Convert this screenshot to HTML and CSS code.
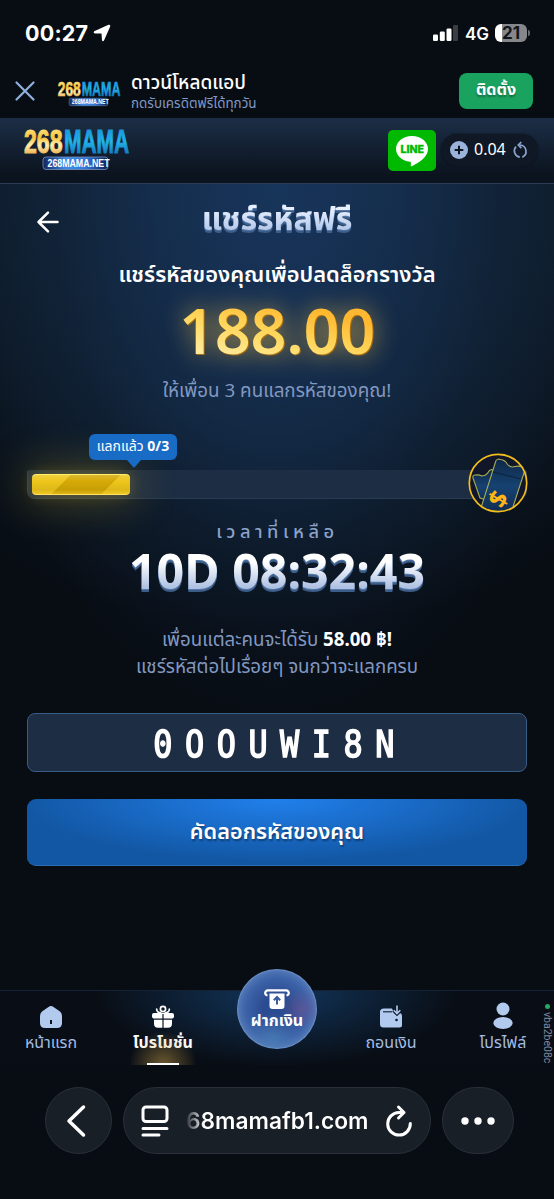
FILE: index.html
```html
<!DOCTYPE html>
<html lang="th">
<head>
<meta charset="utf-8">
<title>268MAMA</title>
<link rel="stylesheet" href="styles.css">
</head>
<body>
<div class="phone">
  <div class="status">
    <span class="clock">00:27</span>
    <svg class="loc" width="18" height="18" viewBox="0 0 18 18"><path d="M1.200 7.200 15.500 .8Q17.800 .2 17.200 2.500L11 16.500Q10 18 9 16.500L8.500 9.500 2 9.500Q-.2 8.700 1.200 7.200Z" fill="#fff"/></svg>
    <svg class="bars" width="26" height="16" viewBox="0 0 26 16"><rect x="0" y="9.500" width="5" height="6.500" rx="1.300" fill="#fff"/><rect x="6.800" y="6.500" width="5" height="9.500" rx="1.300" fill="#fff"/><rect x="13.500" y="3.500" width="5" height="12.500" rx="1.300" fill="#fff"/><rect x="20" y="0" width="5" height="16" rx="1.300" fill="#3a3d42"/></svg>
    <span class="net">4G</span>
    <span class="battery">21</span><span class="cap"></span>
  </div>

  <div class="install">
    <svg class="close" width="20" height="20" viewBox="0 0 20 20" fill="none" stroke="#8fb0dc" stroke-width="2.200" stroke-linecap="round"><path d="M1.500 1.500 18.500 18.500M18.500 1.500 1.500 18.500"/></svg>
    <div class="logo-small">
      <svg width="66" height="31" viewBox="0 0 110 52"><use href="#logo"/></svg>
    </div>
    <div class="install-text">
      <div class="install-title">ดาวน์โหลดแอป</div>
      <div class="install-sub">กดรับเครดิตฟรีได้ทุกวัน</div>
    </div>
    <div class="install-btn">ติดตั้ง</div>
  </div>

  <div class="header">
    <svg class="logo" width="110" height="52" viewBox="0 0 110 52">
      <defs>
        <linearGradient id="gold" x1="0" y1="0" x2="0" y2="1"><stop offset="0" stop-color="#fff0a0"/><stop offset=".4" stop-color="#f9c53c"/><stop offset=".6" stop-color="#fff0b0"/><stop offset="1" stop-color="#e38a12"/></linearGradient>
        <linearGradient id="sky" x1="0" y1="0" x2="0" y2="1"><stop offset="0" stop-color="#1787d4"/><stop offset=".5" stop-color="#22b4ec"/><stop offset="1" stop-color="#0b5ba8"/></linearGradient>
        <linearGradient id="pill" x1="0" x2="1"><stop offset="0" stop-color="#13255e"/><stop offset=".35" stop-color="#3f8ce8"/><stop offset=".65" stop-color="#3479dc"/><stop offset="1" stop-color="#0d1f55"/></linearGradient>
      </defs>
      <g id="logo">
        <g class="logo-word">
          <text transform="translate(1 30) scale(.7 1)" fill="url(#gold)" stroke="url(#gold)">268</text>
          <text transform="translate(41 30) scale(.635 1)" fill="url(#sky)" stroke="url(#sky)">MAMA</text>
        </g>
        <rect x="20" y="34" width="65" height="12.500" rx="3" fill="url(#pill)" stroke="#7793bd" stroke-width=".8"/>
        <text class="logo-net" transform="translate(24.500 43.800) scale(.8 1)">268MAMA.NET</text>
      </g>
    </svg>
    <svg class="line" width="48" height="41" viewBox="0 0 48 41"><rect width="48" height="41" rx="5" fill="#00b900"/><path d="M24 6C15 6 8 11.800 8 19c0 6.500 5.600 11.500 14 12.800 1.200.3 1 1.200.8 2.900-.2 1.500.3 2 1.600 1.300C31 32.500 40 27 40 19 40 11.800 33 6 24 6Z" fill="#fff"/><text class="line-word" x="12.500" y="22.700" textLength="23.500" lengthAdjust="spacingAndGlyphs">LINE</text></svg>
    <div class="balance">
      <svg width="18" height="18" viewBox="0 0 18 18"><circle cx="9" cy="9" r="9" fill="#9bb2da"/><path d="M9 4.700v8.600M4.700 9h8.600" stroke="#0d1420" stroke-width="2"/></svg>
      <span class="amount">0.04</span>
      <svg width="16" height="18" viewBox="0 0 16 18" fill="none" stroke="#8ba4cd" stroke-width="1.700"><path d="M7 4A6.400 6.400 0 0 1 9.300 16.200M6.800 16.200A6.400 6.400 0 0 1 3 5.600M8.300 1 5.300 4.100 8.300 7.100"/></svg>
    </div>
  </div>

  <div class="main">
    <svg class="back" width="22" height="22" viewBox="0 0 22 22" fill="none" stroke="#fff" stroke-width="2.500" stroke-linecap="round" stroke-linejoin="round"><path d="M20.500 11H1.500M11 1.700 1.500 11l9.500 9.300"/></svg>
    <h1 class="title"><span>แชร์รหัสฟรี</span></h1>
    <div class="lead"><span>แชร์รหัสของคุณเพื่อปลดล็อกรางวัล</span></div>
    <div class="prize"><span>188.00</span></div>
    <div class="invite"><span>ให้เพื่อน 3 คนแลกรหัสของคุณ!</span></div>
    <div class="progress">
      <div class="fill"></div>
      <div class="tip">แลกแล้ว <b>0/3</b></div>
      <svg class="ticket" width="60" height="60" viewBox="0 0 60 60">
        <defs><clipPath id="disc"><circle cx="30" cy="30" r="28.500"/></clipPath><linearGradient id="tk" x1="0" y1="0" x2="0" y2="1"><stop offset="0" stop-color="#0f2747"/><stop offset=".5" stop-color="#164272"/><stop offset="1" stop-color="#0e2c52"/></linearGradient></defs>
        <circle cx="30" cy="30" r="29" fill="#121629"/>
        <g clip-path="url(#disc)" fill="url(#tk)" stroke="#a5ad50" stroke-width="1.100">
          <path d="M12 45 5 25q-.8-2.500 2-3 4-.5 7 1 5-.5 7-5 2-2 4-1L28 50Z"/>
          <path d="M12 58 27.500 9q1.200-4 5-2.500 5 .5 7 5 3 3.500 7.500 2 4-1 7 .500 3.500 1 2.500 4.500L43 60Z"/>
          <path d="M25 19 53 26" stroke="#0d233c"/>
        </g>
        <circle cx="30" cy="30" r="28.700" fill="none" stroke="#f3bd1b" stroke-width="1.700"/>
        <text class="dollar" transform="translate(30.500 46) rotate(-60)" y="8.500">$</text>
      </svg>
    </div>
    <div class="left-label"><span>เวลาที่เหลือ</span></div>
    <div class="timer"><span>10D 08:32:43</span></div>
    <div class="note"><span>เพื่อนแต่ละคนจะได้รับ <b>58.00 ฿!</b></span><span>แชร์รหัสต่อไปเรื่อยๆ จนกว่าจะแลกครบ</span></div>
    <div class="code"><span>0OOUWI8N</span></div>
    <div class="copy"><span>คัดลอกรหัสของคุณ</span></div>
  </div>

  <div class="nav">
    <div class="item home"><svg width="24" height="24" viewBox="0 0 24 24"><path d="M9.500 2 3 6.400Q1 8 1 11v7q0 5 5 5h12q5 0 5-5v-7q0-3-2-4.600L14.500 2Q12 .2 9.500 2Z" fill="#b3caef"/><path d="M12 15v4" stroke="#0d1420" stroke-width="2"/></svg><span>หน้าแรก</span></div>
    <div class="item promo"><svg width="24" height="24" viewBox="0 0 24 24"><path d="M3 8h18q2 0 2 2v1.500q0 1.500-1.500 2H2.500Q1 13 1 11.500V10q0-2 2-2ZM3 14.800h18v4q0 4-4 4H7q-4 0-4-4Z" fill="#fff"/><circle cx="12" cy="4" r="2.600" fill="none" stroke="#fff" stroke-width="1.700"/><path d="M10.500 8C7 8 5 6 5.800 3.500M13.500 8c3.500 0 5.500-2 4.700-4.500" fill="none" stroke="#fff" stroke-width="1.700"/><path d="M12 9v14" stroke="#0b1421" stroke-width="1.200"/></svg><span>โปรโมชั่น</span><i></i></div>
    <div class="item slot"></div>
    <div class="item cash"><svg width="24" height="24" viewBox="0 0 24 24"><path d="M5 3.500h8l2 4.500q3 3 6 0 2 .5 2 3V20q0 2.500-2.500 2.500h-16Q1 22.500 1 19V7q0-3.500 4-3.500Z" fill="#b3caef"/><path d="M4 6.800h9" stroke="#17263d" stroke-width="1.200"/><path d="M18 .5v8M14.700 5.200 18 8.500l3.300-3.300" fill="none" stroke="#0b1828" stroke-width="4"/><path d="M18 .5v8M14.700 5.200 18 8.500l3.300-3.300" fill="none" stroke="#b3caef" stroke-width="1.600"/><circle cx="17.500" cy="15" r="1.300" fill="#0d1a2c"/></svg><span>ถอนเงิน</span></div>
    <div class="item user"><svg width="22" height="28" viewBox="0 0 22 28"><circle cx="11" cy="7" r="6.500" fill="#b3caef"/><ellipse cx="11" cy="21" rx="9.700" ry="6" fill="#b3caef"/></svg><span>โปรไฟล์</span></div>
    <div class="deposit"><svg width="26" height="20" viewBox="0 0 26 20"><path d="M3.500 6.500Q1.200 6 1.200 4t2.500-2.700h18.600q2.500.7 2.500 2.700t-2.300 2.500" fill="none" stroke="#fff" stroke-width="2.200"/><path d="M5.500 4.500h15V17q0 3-3 3h-9q-3 0-3-3Z" fill="#fff"/><path d="M13 15.500V8M9.800 11.200 13 8l3.200 3.200" fill="none" stroke="#3a5a9b" stroke-width="2"/></svg><span>ฝากเงิน</span></div>
    <div class="build"><i></i><span>vba2be08c</span></div>
  </div>

  <div class="browser">
    <div class="circle back-btn"><svg width="20" height="32" viewBox="0 0 20 32" fill="none" stroke="#fff" stroke-width="3.500" stroke-linecap="round" stroke-linejoin="round"><path d="M17.500 2 3 16l14.500 14"/></svg></div>
    <div class="url">
      <svg width="28" height="32" viewBox="0 0 28 32" fill="none" stroke="#fff" stroke-width="3" stroke-linecap="round"><rect x="2" y="2" width="24" height="14.500" rx="3"/><path d="M2 23.500h24M2 30h16"/></svg>
      <span class="host">68mamafb1.com</span>
      <svg width="28" height="32" viewBox="0 0 28 32" fill="none" stroke="#fff" stroke-width="3" stroke-linecap="round" stroke-linejoin="round"><path d="M19 7.500H14A11.300 11.300 0 1 0 25.300 18.500M13.500 2 19 7.500 13.500 13"/></svg>
    </div>
    <div class="circle more"><svg width="34" height="8" viewBox="0 0 34 8" fill="#fff"><circle cx="4" cy="4" r="3.700"/><circle cx="17" cy="4" r="3.700"/><circle cx="30" cy="4" r="3.700"/></svg></div>
  </div>
</div>
</body>
</html>
```

FILE: styles.css
```css
* { box-sizing: border-box; }
body { margin: 0; background: #080d14; font-family: "Noto Sans", "Noto Sans Thai", sans-serif; color: #fff; }
.phone { width: 554px; height: 1199px; overflow: hidden; display: flex; flex-direction: column; }
span { white-space: nowrap; }
svg { flex: none; overflow: visible; }

.status { height: 66px; display: flex; align-items: center; padding: 0 24px 0 25px; flex: none; font-family: Inter, sans-serif; }
.clock { font-size: 21.500px; font-weight: 700; letter-spacing: .2px; }
.loc { margin-left: 5px; }
.bars { margin-left: auto; }
.net { font-size: 17px; font-weight: 600; margin: 2px 6px 0 6px; }
.battery { width: 32px; height: 18px; border-radius: 6px; background: linear-gradient(90deg, #fff 21%, #85878a 21%); color: #11151b; font-size: 17px; font-weight: 700; line-height: 18px; text-align: center; }
.cap { width: 2px; height: 6px; margin-left: 1px; border-radius: 0 3px 3px 0; background: #696b70; }

.install { height: 52px; display: flex; flex: none; padding-right: 21px; }
.close { margin: 15px 0 0 15px; }
.logo-small { margin: 12px 0 0 22px; }
.install-text { margin-left: 8px; }
.install-title { font-size: 19px; font-weight: 500; line-height: 24px; margin-top: 4px; white-space: nowrap; }
.install-sub { font-size: 13.450px; line-height: 18px; margin-top: 0; color: #8199c2; white-space: nowrap; }
.install-btn { width: 74px; height: 36px; margin: 7px 0 0 auto; border-radius: 8px; background: #1aa25f; text-align: center; font-weight: 700; font-size: 16px; line-height: 33px; text-shadow: 0 2px 2px #0005; }

.header { height: 66px; flex: none; display: flex; align-items: flex-start; padding: 7px 16px 0 23px; background: linear-gradient(#1c2e47, #0b131e 88%); border-bottom: 1px solid #2a3c58; }
.logo { margin-top: -2px; }
.logo-word { font: 700 33px "Liberation Sans", sans-serif; stroke-width: 1px; }
.logo-net { font: 700 11px "Liberation Sans", sans-serif; fill: #fff; }
.line { margin: 5px 0 0 255px; }
.line-word { font: 800 10px Inter, sans-serif; fill: #00b900; stroke: #00b900; stroke-width: .3px; }
.balance { margin: 9px 0 0 5px; width: 97px; height: 32px; border-radius: 16px; background: #0f1824; box-shadow: 0 0 2px #0008; display: flex; align-items: center; padding: 0 9px; gap: 6px; }
.amount { font-family: "Noto Sans", sans-serif; font-size: 16px; line-height: 30px; width: 33px; position: relative; top: -1px; }

.main { height: 806px; flex: none; padding: 0 27px; position: relative; display: flex; flex-direction: column; align-items: center; text-align: center; background: radial-gradient(ellipse 320px 530px at 50% 0, #17345a, #17345aa0 38%, #12294550 70%, transparent 100%), radial-gradient(ellipse 480px 450px at 50% 0, #14273d, #0f1e2e 55%, transparent 100%); }
.back { position: absolute; left: 37px; top: 27px; }
.title { margin: 11px 0 0; font-size: 32px; line-height: 46px; font-weight: 700; }
.title span, .timer span { display: inline-block; background: linear-gradient(#e8f0ff 30%, #b0c5e8 80%); -webkit-background-clip: text; background-clip: text; -webkit-text-fill-color: transparent; filter: drop-shadow(0 1px 0 #5879a8) drop-shadow(0 2px 0 #3d5d89); }
.lead { font-size: 21.900px; line-height: 32px; font-weight: 600; margin-top: 17px; }
.prize { font-size: 63px; font-weight: 600; letter-spacing: -.3px; line-height: 64px; height: 64px; margin-top: 8px; }
.prize span { display: inline-block; background: linear-gradient(12deg, #ffe99a 15%, #ffd75c 45%, #ffb830 75%); -webkit-background-clip: text; background-clip: text; -webkit-text-fill-color: transparent; filter: drop-shadow(1px 1px 0 #a66d10) drop-shadow(0 0 12px #ffc845a0); }
.invite { font-size: 18.800px; line-height: 26px; margin-top: 15px; color: #8298c1; }
.progress { position: relative; width: 500px; height: 29px; margin-top: 67px; background: #1d2d43; border: 1px solid #293b50; border-radius: 3px 3px 8px 8px; border-top: 0; padding: 4px; }
.fill { width: 98px; height: 21px; border-radius: 4px; background: linear-gradient(#fff3, #0000 35%, #0001 75%, #ffd83c66), linear-gradient(135deg, #edc51a 0 33%, #d5a906 33% 75%, #edc51a 75%); box-shadow: 0 0 44px 6px #d2ad2055, 0 0 14px #d2ad2044, inset 0 1px #fff06a, inset 0 -1px #ffe063; }
.tip { position: absolute; left: 61px; top: -36px; width: 88px; height: 26px; border-radius: 6px; background: #196cc5; font-size: 14px; line-height: 24px; white-space: nowrap; }
.tip::after { content: ""; position: absolute; left: 38px; top: 26px; border: 7px solid transparent; border-top: 8px solid #196cc5; border-bottom: 0; }
.ticket { position: absolute; right: -2px; top: -17px; }
.dollar { font: 700 25px "Noto Sans", sans-serif; fill: #ffb516; text-anchor: middle; }
.left-label { font-size: 18.300px; line-height: 24px; letter-spacing: 4.500px; padding-left: 1px; color: #8ba2ca; margin-top: 20px; font-weight: 500; }
.timer { font-size: 48.300px; font-weight: 700; line-height: 54px; margin-top: 0; }
.timer span { background-image: linear-gradient(#fff 35%, #afc1e2 82%); }
.note { font-size: 18.700px; line-height: 27px; color: #8298c1; margin-top: 28px; display: flex; flex-direction: column; align-items: center; }
.note b { color: #fff; }
.code { width: 500px; height: 59px; margin-top: 34px; border: 1px solid #395b87; border-radius: 8px; background: #1d2d43; font: 400 37.500px/60px "DejaVu Sans Mono", monospace; letter-spacing: 14.700px; -webkit-text-stroke: 1.600px #fff; }
.code span { display: inline-block; transform: scaleX(.85); margin: 0 -30px 0 -24px; }
.copy { width: 500px; height: 67px; margin-top: 27px; border-radius: 9px; border-bottom: 1px solid #2e6eb4; font-size: 21.700px; font-weight: 600; line-height: 63px; text-shadow: 1px 2px 2px #0006; background: radial-gradient(ellipse 255px 62px at 50% 0, #2180ec, #1257a4); }

.nav { height: 75px; flex: none; position: relative; display: flex; border-top: 1px solid #142236; background: radial-gradient(ellipse 180px 75px at 50% 0, #12365c, transparent), #090e16; color: #a5bce2; font-size: 16px; }
.item { flex: none; display: flex; flex-direction: column; align-items: center; position: relative; }
.item svg { margin-top: 14px; height: 24px; }
.item span { line-height: 22px; margin-top: 2px; }
.home { width: 102px; }
.promo { width: 122px; color: #fff; font-weight: 700; }
.promo::before { content: ""; position: absolute; bottom: 0; width: 64px; height: 34px; background: radial-gradient(ellipse 34px 34px at 50% 100%, #c49b4588, transparent); }
.promo i { position: absolute; bottom: 0; width: 32px; height: 2px; background: #fff; }
.slot { width: 106px; }
.cash { width: 122px; }
.user { width: 102px; }
.item.user svg { height: 28px; margin-top: 11px; margin-bottom: -1px; }
.deposit { position: absolute; left: 237px; top: -22px; width: 80px; height: 80px; border-radius: 50%; background: radial-gradient(circle at 80% 50%, #75528e88, transparent 26%), radial-gradient(circle at 45% 88%, #4f86bb99, transparent 32%), radial-gradient(circle, #2c4c91 25%, #3c62a8 55%, #83a7d6 100%); box-shadow: inset 0 0 2px #9dbde6; color: #fff; font-weight: 700; display: flex; flex-direction: column; align-items: center; padding-top: 20px; }
.deposit span { font-size: 16px; line-height: 22px; margin-top: 0; }
.build { position: absolute; left: 541px; top: 13px; writing-mode: vertical-rl; font: 10.500px/13px Roboto, sans-serif; color: #7f8ba0; display: flex; align-items: center; gap: 3px; }
.build i { width: 5px; height: 5px; border-radius: 50%; background: #22aa62; }

.browser { display: flex; padding: 22px 40px 0 45px; gap: 11px; }
.circle, .url { height: 67px; border: 1px solid #2a3039; background: #191f27; border-radius: 34px; display: flex; align-items: center; justify-content: center; flex: none; }
.circle { width: 67px; }
.back-btn { padding-right: 5px; }
.more { width: 72px; }
.url { width: 308px; gap: 17px; }
.host { font: 600 22.700px Inter, sans-serif; width: 182px; background: linear-gradient(90deg, #fff1, #fff 18px); -webkit-background-clip: text; background-clip: text; color: transparent; }
```
